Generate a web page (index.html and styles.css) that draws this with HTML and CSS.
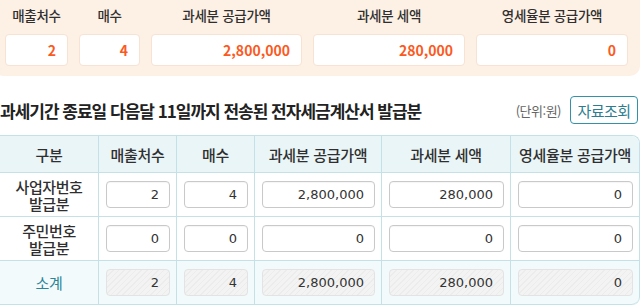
FILE: index.html
```html
<!DOCTYPE html>
<html lang="ko">
<head>
<meta charset="utf-8">
<title>전자세금계산서 발급분</title>
<link rel="stylesheet" href="styles.css">
</head>
<body>
<section class="summary">
  <div class="sum-grid">
    <div class="sum-label">매출처수</div>
    <div class="sum-label">매수</div>
    <div class="sum-label">과세분 공급가액</div>
    <div class="sum-label">과세분 세액</div>
    <div class="sum-label">영세율분 공급가액</div>
    <div class="sum-box">2</div>
    <div class="sum-box">4</div>
    <div class="sum-box">2,800,000</div>
    <div class="sum-box">280,000</div>
    <div class="sum-box">0</div>
  </div>
</section>

<div class="title-row">
  <h2 class="title">과세기간 종료일 다음달 11일까지 전송된 전자세금계산서 발급분</h2>
  <span class="unit">(단위:원)</span>
  <button class="btn" type="button">자료조회</button>
</div>

<table class="grid">
  <colgroup>
    <col class="c1"><col class="c2"><col class="c3"><col class="c4"><col class="c5"><col class="c6">
  </colgroup>
  <thead>
    <tr>
      <th>구분</th>
      <th>매출처수</th>
      <th>매수</th>
      <th>과세분 공급가액</th>
      <th>과세분 세액</th>
      <th>영세율분 공급가액</th>
    </tr>
  </thead>
  <tbody>
    <tr>
      <th class="row-label"><span class="ln">사업자번호</span><span class="ln">발급분</span></th>
      <td><input class="num" type="text" value="2"></td>
      <td><input class="num" type="text" value="4"></td>
      <td><input class="num" type="text" value="2,800,000"></td>
      <td><input class="num" type="text" value="280,000"></td>
      <td><input class="num" type="text" value="0"></td>
    </tr>
    <tr>
      <th class="row-label"><span class="ln">주민번호</span><span class="ln">발급분</span></th>
      <td><input class="num" type="text" value="0"></td>
      <td><input class="num" type="text" value="0"></td>
      <td><input class="num" type="text" value="0"></td>
      <td><input class="num" type="text" value="0"></td>
      <td><input class="num" type="text" value="0"></td>
    </tr>
    <tr class="total">
      <th class="row-label total-label">소계</th>
      <td><input class="num ro" type="text" value="2" readonly></td>
      <td><input class="num ro" type="text" value="4" readonly></td>
      <td><input class="num ro" type="text" value="2,800,000" readonly></td>
      <td><input class="num ro" type="text" value="280,000" readonly></td>
      <td><input class="num ro" type="text" value="0" readonly></td>
    </tr>
  </tbody>
</table>
</body>
</html>
```

FILE: styles.css
```css
* { box-sizing: border-box; }

html, body {
  margin: 0;
  padding: 0;
  background: #ffffff;
}

body {
  width: 644px;
  height: 305px;
  overflow: hidden;
  font-family: "Noto Sans CJK KR", "Noto Sans", sans-serif;
  color: #333333;
}

/* ---------- summary panel ---------- */
.summary {
  margin-left: -6px;
  width: 646px;
  background: #fdf0e5;
  border-radius: 0 0 10px 10px;
  padding: 0 11px 10px 11px;
}

.sum-grid {
  display: grid;
  grid-template-columns: 63px 61px 151px 152px 152px;
  grid-template-rows: 30px 32px;
  column-gap: 11px;
  row-gap: 4px;
}

.sum-label {
  display: flex;
  align-items: center;
  justify-content: center;
  font-size: 13.5px;
  font-weight: 500;
  letter-spacing: -0.3px;
  color: #2f2f2f;
}

.sum-box {
  display: flex;
  align-items: center;
  justify-content: flex-end;
  background: #ffffff;
  border: 1px solid #f8e2d2;
  border-radius: 4px;
  padding-right: 11px;
  font-size: 14px;
  font-weight: 700;
  color: #fb5a1f;
}

/* ---------- title row ---------- */
.title-row {
  display: flex;
  align-items: center;
  height: 28px;
  margin-top: 20px;
  padding-right: 6px;
}

.title {
  flex: 1;
  margin: 0;
  font-size: 17px;
  font-weight: 700;
  letter-spacing: -1px;
  color: #222222;
  white-space: nowrap;
}

.unit {
  font-size: 13px;
  letter-spacing: -0.5px;
  color: #666666;
  margin-right: 9px;
}

.btn {
  width: 68px;
  height: 28px;
  padding: 0;
  background: #ffffff;
  border: 1px solid #3592a6;
  border-radius: 4px;
  font-family: inherit;
  font-size: 15px;
  font-weight: 400;
  letter-spacing: -0.5px;
  color: #2c7d8f;
}

/* ---------- table ---------- */
.grid {
  margin-top: 11px;
  margin-left: -1px;
  width: 640px;
  table-layout: fixed;
  border-collapse: separate;
  border-spacing: 0;
  border-top: 1px solid #c3e1e7;
  border-right: 1px solid #c3e1e7;
  border-radius: 0 8px 8px 0;
}

.c1 { width: 99px; }
.c2 { width: 78px; }
.c3 { width: 78px; }
.c4 { width: 127px; }
.c5 { width: 129px; }
.c6 { width: 129px; }

.grid th,
.grid td {
  padding: 0;
  border-left: 1px solid #c3e1e7;
  border-bottom: 1px solid #c3e1e7;
  text-align: center;
  vertical-align: middle;
}

.grid thead th {
  height: 37px;
  background: #e9f5f7;
  font-size: 15px;
  font-weight: 500;
  letter-spacing: -0.3px;
  color: #2f2f2f;
}

.grid thead th:last-child { border-top-right-radius: 8px; }
.grid tbody tr:last-child td:last-child { border-bottom-right-radius: 8px; }

.grid tbody tr { height: 44px; }

.row-label {
  font-size: 15px;
  font-weight: 500;
  letter-spacing: -0.4px;
  line-height: 17px;
  color: #2f2f2f;
  background: #ffffff;
}

.ln {
  display: block;
  height: 17px;
}

.grid td { background: #ffffff; padding: 0 6px 0 7px; }

.total th,
.total td { background: #f3fafb; }

.row-label.total-label {
  color: #2b8598;
  font-weight: 400;
}

.num {
  display: block;
  width: 100%;
  height: 27px;
  padding: 0 10px 0 4px;
  border: 1px solid #c9c9c9;
  border-radius: 4px;
  background: #ffffff;
  font-family: "DejaVu Sans", sans-serif;
  font-size: 13px;
  color: #333333;
  text-align: right;
  box-shadow: inset 0 1px 1px rgba(0,0,0,0.04);
}

.num.ro {
  border-color: #e3e3e3;
  background: repeating-linear-gradient(135deg, #ececec 0 1px, #f3f3f3 1px 4px);
  box-shadow: none;
}
```
